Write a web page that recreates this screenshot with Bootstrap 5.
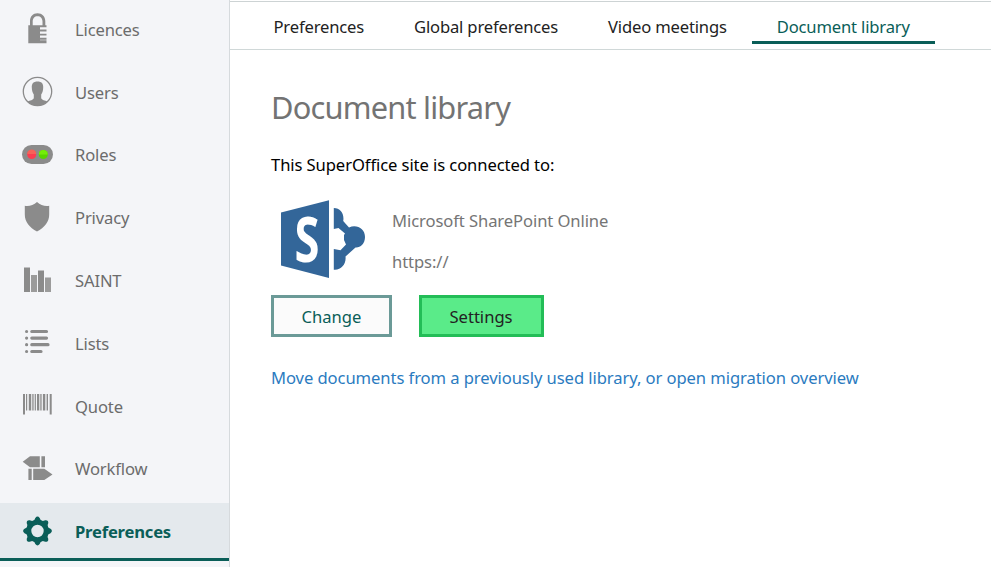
<!DOCTYPE html>
<html lang="en">
<head>
<meta charset="utf-8">
<meta name="viewport" content="width=device-width, initial-scale=1">
<title>Document library</title>
<link href="https://cdn.jsdelivr.net/npm/bootstrap@5.3.0/dist/css/bootstrap.min.css" rel="stylesheet">
<style>
body{font-family:"Noto Sans","Open Sans",sans-serif;font-size:16.6px;line-height:24px;color:#000;letter-spacing:-.09px}
.side{width:229.500px;background:#f4f5f8;border-right:1px solid #d6dadd;color:#6c6c6c}
.side .item{height:62.8px;padding:0 0 4px 22px;color:#6c6c6c;border-radius:0;letter-spacing:-.15px}
.side .item svg{width:31px;height:32px;margin-right:22px;fill:#8b8b8b;overflow:visible}
.side .item span{padding-top:1px}
.side .item.current{height:58px;margin-top:.6px;padding-bottom:0;background:#e4e9ed;color:#0a5e58;font-weight:700;border-bottom:3px solid #0a5e58;letter-spacing:-.2px}
.side .item.current svg{margin-top:1px;fill:#0a5e58}
.side .item.current span{padding-top:3px}
.tabs{height:49px;margin-top:1px;padding-left:19px;border-top:1px solid #cdd3d4;border-bottom:1px solid #d0d8d8}
.tabs .nav-link{height:42px;padding:13px 25px 0;color:#222;border-bottom:3px solid transparent;border-radius:0;letter-spacing:-.17px}
.tabs .nav-link.active{color:#0a5e58;border-color:#0a5e58}
.pane{padding:37px 0 0 41.500px}
h1{font-size:30.8px;line-height:40px;color:#737373;font-weight:400;margin-bottom:26px;letter-spacing:-.8px}
.source{height:79px;margin:23px 0 16px 10px;color:#757575}
.logo{width:85px;height:79px;margin-right:26px;overflow:visible}
.source .info{gap:17px;padding-top:9px}
.act{height:42px;padding:2px 0 0;border-radius:0;border-width:3px;font-size:inherit}
.change{width:121px;margin-right:26.500px;border-color:#6b9a97;background:#fbfbfb;color:#0a5e58}
.settings{width:125px;border-color:#23bd57;background:#5aeb89;color:#222}
.move{color:#2b7bbf;letter-spacing:-.08px}
.migrate{margin-top:29px}
</style>
</head>
<body class="vh-100 overflow-hidden">
<div class="d-flex h-100">
<nav class="side nav flex-column flex-nowrap flex-shrink-0">
<a class="item nav-link d-flex align-items-center" href="#"><svg viewBox="0 0 31 32"><path d="M6.3 32V14H8V10C8 5 11 2 15.500 2S23.300 5 23.300 10V14H24.500V16H18V18.300H24.500V20.200H18V22.500H24.500V24.300H18V26.500H24.500V28.500H18V29H24.500V32ZM10.700 14H20.500V10.500C20.500 7 18.500 5 15.500 5S10.700 7 10.700 10.500Z" transform="translate(0 -1.800)"/></svg><span>Licences</span></a>
<a class="item nav-link d-flex align-items-center" href="#"><svg viewBox="0 0 31 32"><circle cx="15.500" cy="15.500" r="14.200" fill="none" stroke="#8b8b8b" stroke-width="1.300"/><path d="M15.500 5.500C11.500 5.500 9.600 7.500 9.800 11.500C9.800 15 10.800 17 11.800 18.500V22C11.300 24 8 24.500 5.300 25.600A14 14 0 0 0 25.700 25.600C23 24.500 19.700 24 19.200 22V18.500C20.200 17 21.200 15 21.200 11.500C21.400 7.500 19.500 5.500 15.500 5.500Z"/></svg><span>Users</span></a>
<a class="item nav-link d-flex align-items-center" href="#"><svg viewBox="0 0 31 32"><rect y="6" width="31" height="19" rx="9.500"/><circle cx="9.700" cy="15.500" r="4.500" fill="#fc3d50"/><path d="M5.200 15a4.500 4.500 0 0 1 9 0Z" fill="#f66258"/><circle cx="21.300" cy="15.500" r="4.500" fill="#58d600"/><path d="M16.800 15.500a4.500 4.500 0 0 1 9 0Z" fill="#74ed09"/></svg><span>Roles</span></a>
<a class="item nav-link d-flex align-items-center" href="#"><svg viewBox="0 0 31 32"><path d="M2.800 3.700C7 4.400 11.500 3.200 15 0C18.500 3.200 23 4.400 27.200 3.700V12.500C27.200 20 22.500 25.500 15 29.500C7.500 25.500 2.800 20 2.800 12.500Z"/></svg><span>Privacy</span></a>
<a class="item nav-link d-flex align-items-center" href="#"><svg viewBox="0 0 31 32"><path d="M2 2.500h6v24.500H2zM16 5.500h6v21.500h-6z"/><path d="M9 10h6v17H9zM23 12.500h6v14.500h-6z" opacity=".85"/></svg><span>SAINT</span></a>
<a class="item nav-link d-flex align-items-center" href="#"><svg viewBox="0 0 31 32" stroke="#8b8b8b" stroke-width="3.200" stroke-linecap="round"><path d="M4.600 4.500h0M9.800 4.500h14.700M4.600 11.100h0M9.800 11.100h14.700M4.600 17.700h0M9.800 17.700h16.200M4.600 24.500h0M9.800 24.500h9.200"/></svg><span>Lists</span></a>
<a class="item nav-link d-flex align-items-center" href="#"><svg viewBox="0 0 31 32"><path d="M1 4h2v20.500H1zM27.700 4h2v20.500h-2zM4 4h1.200v16.500H4zM6.800 4h2.400v16.500H6.800zM10.300 4h1.300v16.500h-1.300zM12.700 4h1.200v16.500h-1.200zM15 4h2.300v16.500H15zM18.300 4h1.300v16.500h-1.300zM20.900 4h2.400v16.500h-2.400zM24.600 4h1.400v16.500h-1.400z"/></svg><span>Quote</span></a>
<a class="item nav-link d-flex align-items-center" href="#"><svg viewBox="0 0 31 32"><path d="M.7 8.800L8 3.200H17.800V14.300H8ZM19.400 3.200H23V14.300H19.400ZM6.400 15.800H9.700V27H6.400ZM11.200 15.800H22.300L30.500 21.400L22.300 27H11.200Z"/></svg><span>Workflow</span></a>
<a class="item current nav-link d-flex align-items-center" aria-current="page" href="#"><svg viewBox="0 0 31 32"><g transform="translate(15.500 16)"><circle r="8.700" fill="none" stroke="#0a5e58" stroke-width="5"/><g id="teeth"><path id="tooth" d="M-5-9.300Q-2.700-11-2.200-13Q0-15.800 2.200-13Q2.700-11 5-9.300Z"/><use href="#tooth" transform="rotate(45)"/><use href="#tooth" transform="rotate(90)"/><use href="#tooth" transform="rotate(135)"/></g><use href="#teeth" transform="rotate(180)"/></g></svg><span>Preferences</span></a>
</nav>
<main class="flex-grow-1">
<nav class="tabs nav flex-nowrap">
<a class="nav-link" href="#">Preferences</a>
<a class="nav-link" href="#">Global preferences</a>
<a class="nav-link" href="#">Video meetings</a>
<a class="nav-link active" href="#">Document library</a>
</nav>
<section class="pane">
<h1>Document library</h1>
<p class="mb-0">This SuperOffice site is connected to:</p>
<div class="source d-flex">
<svg class="logo" viewBox="0 0 85 79" fill="#336699"><path d="M0 12.500L48 .3V78L0 65.500Z"/><text transform="translate(13.500 61.500) scale(.72 1)" font-family="Noto Sans" font-weight="700" font-size="63" letter-spacing="0" fill="#fff">S</text><path d="M52.800 8C59.500 8 63.500 14 62.200 21L68 27.500C76 24 84 29 84 37C84 44 79 48 74.500 47.500L64.500 56.500C65.500 64 60 70.500 52.800 69.700V49L59.500 50.300L65 44.500L63 40V35L64 33.500L57.500 28L52.800 29Z"/></svg>
<div class="info d-flex flex-column"><span>Microsoft SharePoint Online</span><span>https://</span></div>
</div>
<div class="d-flex">
<button class="btn act change" type="button">Change</button>
<button class="btn act settings" type="button">Settings</button>
</div>
<p class="migrate mb-0"><a class="move text-decoration-none" href="#">Move documents from a previously used library, or open migration overview</a></p>
</section>
</main>
</div>
<script src="https://cdn.jsdelivr.net/npm/bootstrap@5.3.0/dist/js/bootstrap.bundle.min.js"></script>
</body>
</html>
